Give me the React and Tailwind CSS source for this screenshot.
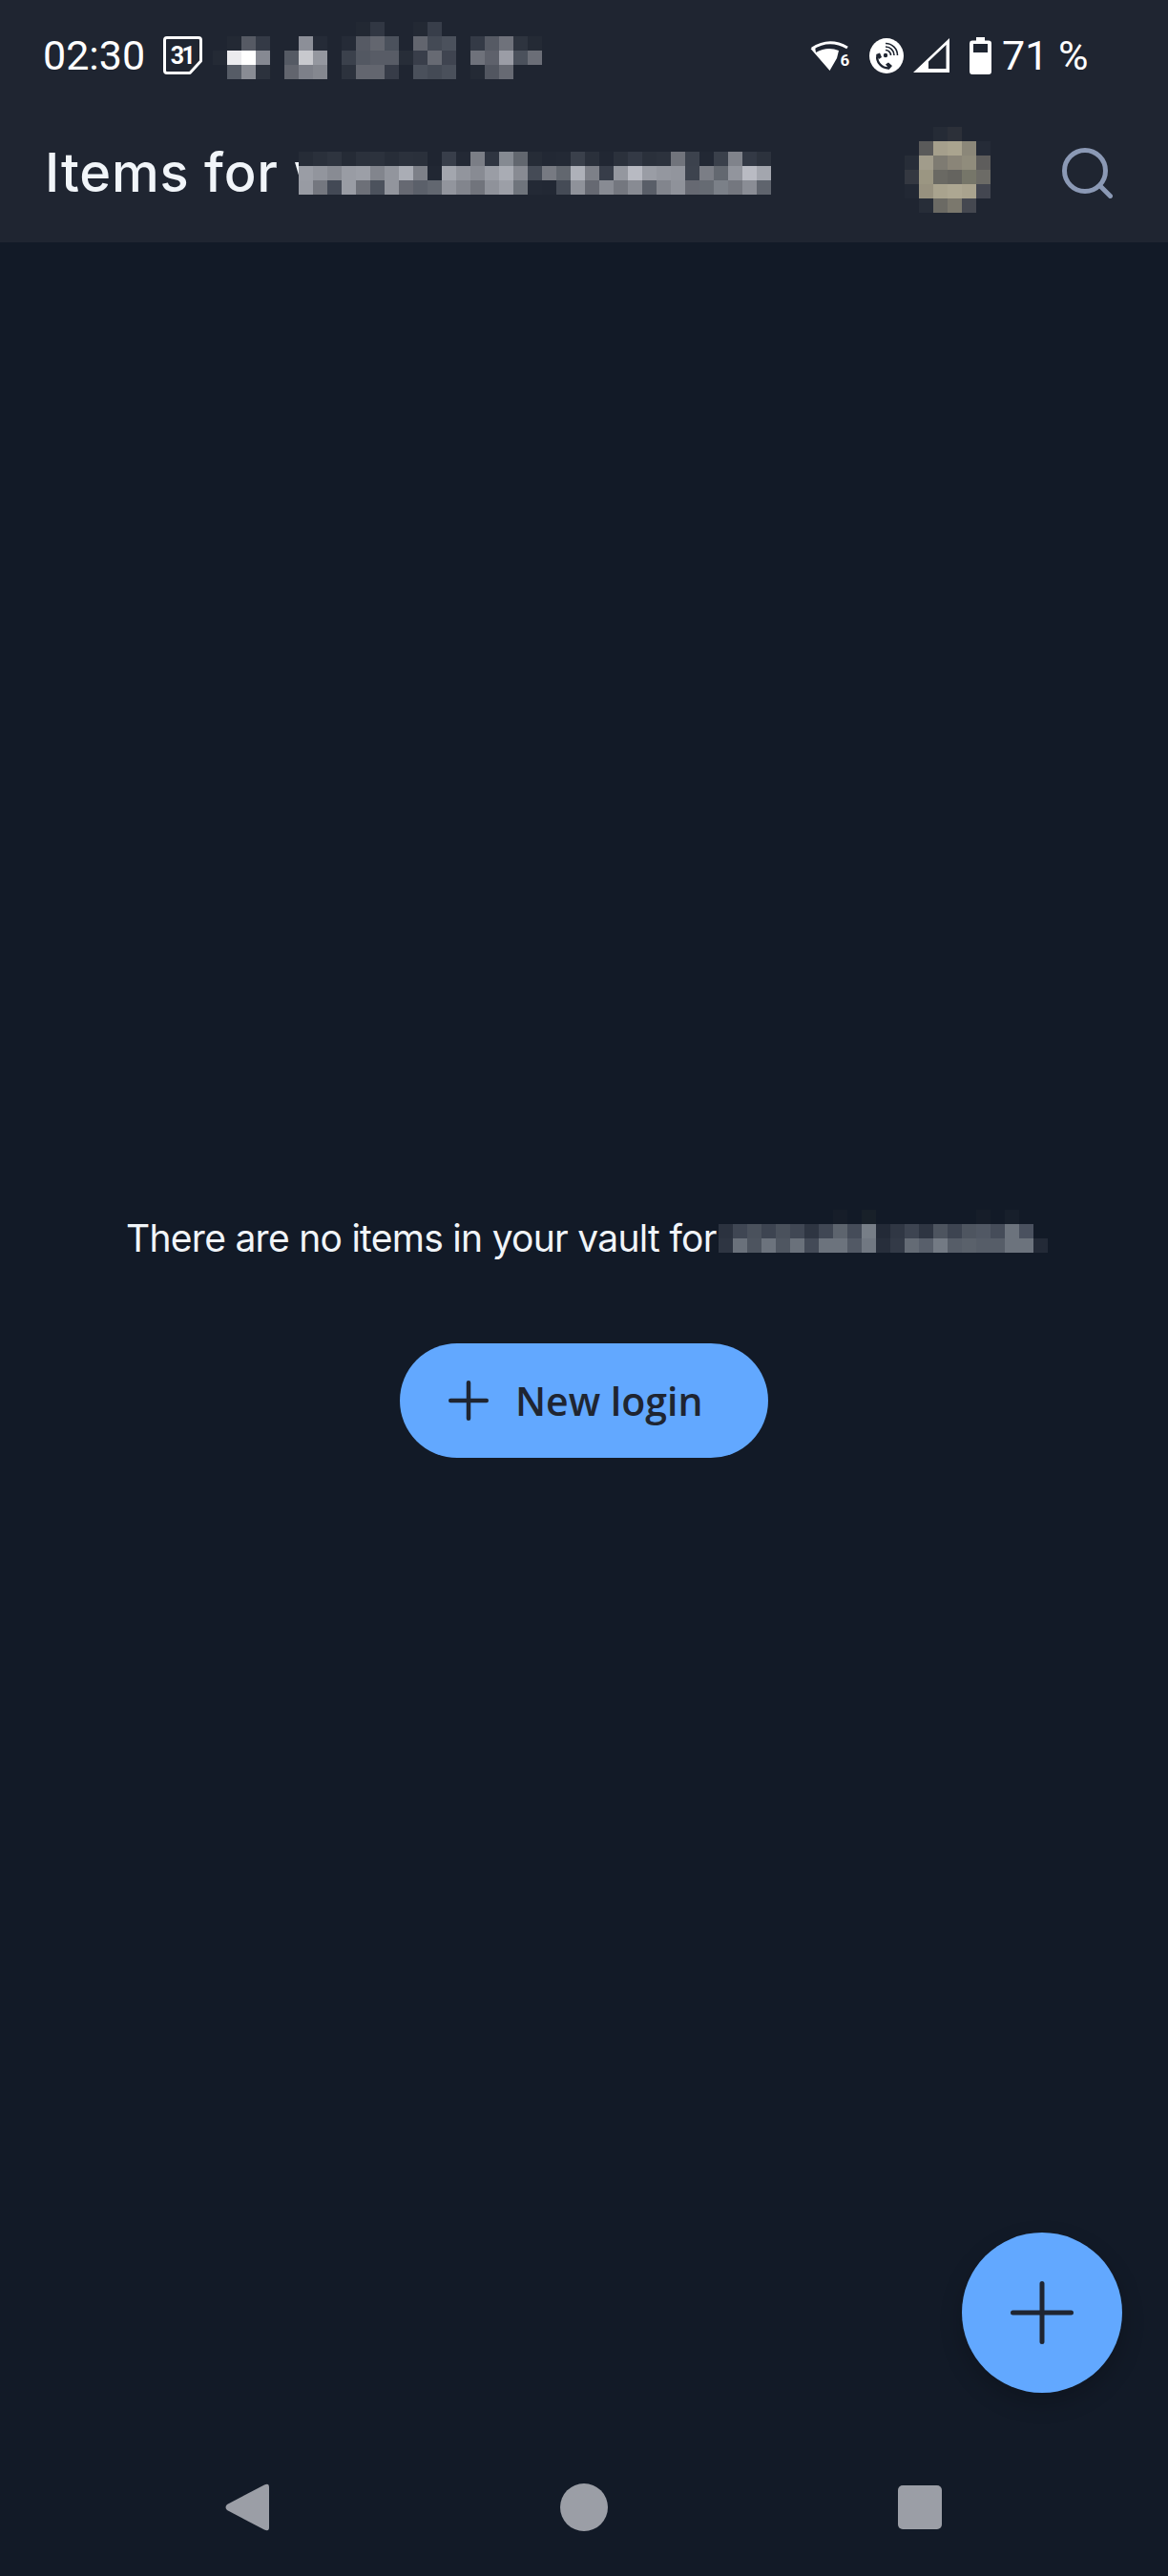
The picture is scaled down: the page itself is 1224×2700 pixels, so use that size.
import React from 'react';

const statusPixels = [
  '. . . . . . . . . . #222833 #313743 . . #232934 #383e4a',
  '. #232934 #565a64 #343a46 . . #8c8f98 #252b37 . #252b37 #565a64 #63666f #4b515c . #62656e #444a55 #4b515c . #343a46 #565a64 #6f727b #2e343f #242a35',
  '#242a35 #ebebee #ffffff #868992 . #555a64 #c8c9ce #94979f . #3b414c #535862 #585c66 #585c66 #272d38 #393e4a #676a73 #3f4450 . #6f727b #5e616b #9b9da6 #4b515c #6b6e77',
  '. #565c66 #898c94 #2c323d . #62656e #7d8089 #84878f . #2c323d #63666f #63666f #373c48 . #4a505b #444a55 #4a505b . #242a35 #525660 #676a73',
];

const titlePixels = [
  '#262c37 #2a303b #2e343f #252b36 #2b313c #2c323d #272d38 #2b313c #2a303b . #383e4a #232935 #7b7e86 #2f3541 #858a92 #62676f #262c37 #222834 #232935 #3a404b #2a303b #212733 #2b313c #333945 #2a303b #2c323d #71747c #3c424d #222834 #3a404b #80838b #333945 #2c323d',
  '#9a9da5 #92959d #888b93 #999ca4 #9c9fa7 #82858d #92959d #aaadb5 #7d8088 #212733 #a3a6ae #92959d #888b93 #9a9da5 #a9acb4 #888b93 #454b56 #777a82 #62676f #aeb1b9 #7d8088 #373d49 #94979f #b8bac2 #9a9da5 #94979f #92959d #3d434e #7b7e86 #636870 #92959d #b9bbc3 #a3a6ae',
  '#989ba3 #74777f #434955 #999ca4 #6d7078 #4c525d #92959d #666972 #5b606a #626770 #92959d #82858d #71747c #8f929a #9c9fa7 #6f747c #232935 #222834 #454b56 #8f929a #666972 #888b93 #74777f #888b93 #595e68 #82858d #8f929a #666972 #666b73 #7b8088 #74777f #8a8d95 #5f646d',
];

const avatarPixels = [
  '. . #252b36 #2c3039 . .',
  '. #5a5a5a #a59f8c #aaa48f #8b8779 #252b37',
  '#272d38 #a19c8b #7e7b72 #8a8578 #908c7c #5e5d5c',
  '#343841 #9b9682 #6a6963 #65645f #767669 #6c6b66',
  '#222834 #97917f #a9a38e #ada792 #a9a38e #434650',
  '. #272d38 #6b6a64 #7b786d #454850 .',
];

const vaultPixels = [
  '. . . . . . . . #161d29 . #182029 . . . . . . . #161d29 . #171f2b . .',
  '#2b323f #3f4653 #4a515c #3d4451 #4a515c #404754 #2e3542 #404754 #5d646e #454c59 #777e87 #232a37 #303744 #3d4451 #2e3542 #4d545f #3d4451 #4e5560 #515864 #454c59 #6c737d #4a515f .',
  '#2e3542 #6a717b #4d545f #6c737d #4f5661 #6a717b #434a57 #6c737d #6c737d #525965 #717882 #272e3b #333a47 #646b75 #585f6b #737a84 #565d68 #5a616b #565d68 #565d68 #6c737d #6c737d #232a37',
];

// blurred bits of the screenshot, 15px blocks
const Mosaic = ({ rows, className }) => {
  const cols = Math.max(...rows.map((r) => r.split(' ').length));
  return (
    <svg
      width={cols * 15}
      height={rows.length * 15}
      viewBox={`0 0 ${cols * 15} ${rows.length * 15}`}
      shapeRendering="crispEdges"
      className={className}
    >
      {rows.map((row, y) =>
        row.split(' ').map((color, x) =>
          color === '.' ? null : (
            <rect key={`${x}-${y}`} x={x * 15} y={y * 15} width="15" height="15" fill={color} />
          )
        )
      )}
    </svg>
  );
};

const PlusIcon = ({ size, stroke, className }) => (
  <svg width={size} height={size} viewBox={`0 0 ${size} ${size}`} className={className}>
    <path
      d={`M${size / 2} ${stroke / 2}V${size - stroke / 2}M${stroke / 2} ${size / 2}H${size - stroke / 2}`}
      stroke="#1f2531"
      strokeWidth={stroke}
      strokeLinecap="round"
      fill="none"
    />
  </svg>
);

const CalendarIcon = () => (
  <svg width="41" height="40" viewBox="0 0 41 40" className="ml-[19px] shrink-0">
    <path
      d="M4 1.5H37Q39.5 1.5 39.5 4V26L28 38.5H4Q1.5 38.5 1.5 36V4Q1.5 1.5 4 1.5Z"
      fill="none"
      stroke="#fff"
      strokeWidth="3"
      strokeLinejoin="round"
    />
    <text x="19.5" y="28.5" textAnchor="middle" fontSize="25" fontWeight="700" letterSpacing="-2.5" fill="#fff" fontFamily="Roboto, sans-serif">
      31
    </text>
  </svg>
);

const WifiIcon = () => (
  <svg width="44" height="33" viewBox="0 0 44 33" className="ml-[281px] shrink-0">
    <path d="M2 9Q20 -3 39 8" fill="none" stroke="#fff" strokeWidth="3" />
    <path d="M0.5 9L5 7L6 13Q18 6 30 11L28 19L20.5 32Z" fill="#fff" />
    <text
      x="36.5"
      y="26.5"
      textAnchor="middle"
      fontSize="17"
      fontWeight="700"
      fill="#fff"
      stroke="#1f2531"
      strokeWidth="3"
      paintOrder="stroke"
      fontFamily="Roboto, sans-serif"
    >
      6
    </text>
  </svg>
);

const CallIcon = () => (
  <svg width="36" height="37" viewBox="0 0 36 37" className="ml-[18px] shrink-0">
    <ellipse cx="18" cy="18.5" rx="18" ry="18.5" fill="#fff" />
    <circle cx="17" cy="18" r="2.2" fill="#1f2531" />
    <path
      d="M17 12.5A5.5 5.5 0 0 1 22.5 18M17 9A9 9 0 0 1 26 18M17 5.5A12.5 12.5 0 0 1 29.5 18"
      fill="none"
      stroke="#1f2531"
      strokeWidth="1.6"
    />
    <path d="M8.5 18C7 25 13 32 21 31.5" fill="none" stroke="#1f2531" strokeWidth="2.4" />
    <path d="M7 17L11 15.5L13 20L10 22ZM17 27.5L20 25.5L24 29L21 32.5Z" fill="#1f2531" />
  </svg>
);

const SignalIcon = () => (
  <svg width="38" height="36" viewBox="0 0 38 36" className="ml-[10px] shrink-0">
    <path fillRule="evenodd" d="M0 36L38 0V36ZM16 32H34.5V7L16 24.5Z" fill="#fff" />
  </svg>
);

const BatteryIcon = () => (
  <svg width="23" height="39" viewBox="0 0 23 39" className="ml-[21px] shrink-0">
    <path
      fillRule="evenodd"
      d="M7 0H16V3.5H20Q23 3.5 23 6.5V36Q23 39 20 39H3Q0 39 0 36V6.5Q0 3.5 3 3.5H7ZM4 7V16H19V7Z"
      fill="#fff"
    />
  </svg>
);

const SearchIcon = () => (
  <svg width="53" height="53" viewBox="0 0 53 53" className="ml-[75px] shrink-0">
    <circle cx="24" cy="24" r="21.5" fill="none" stroke="#8b99b5" strokeWidth="5" />
    <path d="M40 40L50.5 50.5" stroke="#8b99b5" strokeWidth="5" strokeLinecap="round" />
  </svg>
);

const App = () => {
  return (
    <div className="w-[1224px] h-[2700px] flex flex-col bg-[#121a27] font-['Inter',sans-serif] overflow-hidden">
      <header className="h-[254px] shrink-0 bg-[#1f2531]">
        <div className="h-[116px] flex items-center pl-[45px]">
          <span className="font-['Roboto',sans-serif] text-[43px] leading-none text-white">02:30</span>
          <CalendarIcon />
          <Mosaic rows={statusPixels} className="ml-[11px] self-start mt-[23px] shrink-0" />
          <WifiIcon />
          <CallIcon />
          <SignalIcon />
          <BatteryIcon />
          <span className="ml-[11px] font-['Roboto',sans-serif] text-[43px] leading-none text-white whitespace-nowrap">71 %</span>
        </div>
        <div className="relative h-[130px] flex items-center pl-[47px] pr-[58px]">
          <span className="text-[56px] leading-none font-medium tracking-[0.8px] text-[#f1f5f9] whitespace-nowrap">Items for w</span>
          <Mosaic rows={titlePixels} className="absolute left-[313px] top-[43px]" />
          <Mosaic rows={avatarPixels} className="ml-auto -mt-[6px] shrink-0" />
          <SearchIcon />
        </div>
      </header>

      <main className="relative flex-1 flex flex-col items-center pt-[1014px]">
        <div className="flex items-start h-[60px] w-full pl-[132px]">
          <span className="text-[39px] leading-[60px] tracking-[-0.72px] text-[#f1f5f9] whitespace-nowrap">There are no items in your vault for</span>
          <Mosaic rows={vaultPixels} className="ml-[2px] shrink-0" />
        </div>
        <button className="mt-[80px] w-[386px] h-[120px] rounded-full bg-[#62a8ff] flex items-center pl-[51px]">
          <PlusIcon size={42} stroke={4.5} />
          <span className="ml-[28px] font-['Open_Sans',sans-serif] text-[41px] leading-none font-semibold text-[#1f2531]">New login</span>
        </button>
        <button className="absolute right-[48px] bottom-[52px] w-[168px] h-[168px] rounded-full bg-[#62a8ff] flex items-center justify-center shadow-[0_10px_24px_rgba(0,0,0,0.2)]">
          <PlusIcon size={66} stroke={5} />
        </button>
      </main>

      <nav className="h-[140px] shrink-0 flex items-start pt-[43px] pl-[236px]">
        <svg width="46" height="50" viewBox="0 0 46 50">
          <path d="M41 1.5Q46 -1 46 4V46Q46 51 41 48.5L2 28Q-1 25 2 22Z" fill="#9b9ea6" />
        </svg>
        <div className="ml-[305px] w-[50px] h-[50px] rounded-full bg-[#9b9ea6]" />
        <div className="ml-[304px] mt-[2px] w-[46px] h-[46px] rounded-[5px] bg-[#9b9ea6]" />
      </nav>
    </div>
  );
};

export default App;
